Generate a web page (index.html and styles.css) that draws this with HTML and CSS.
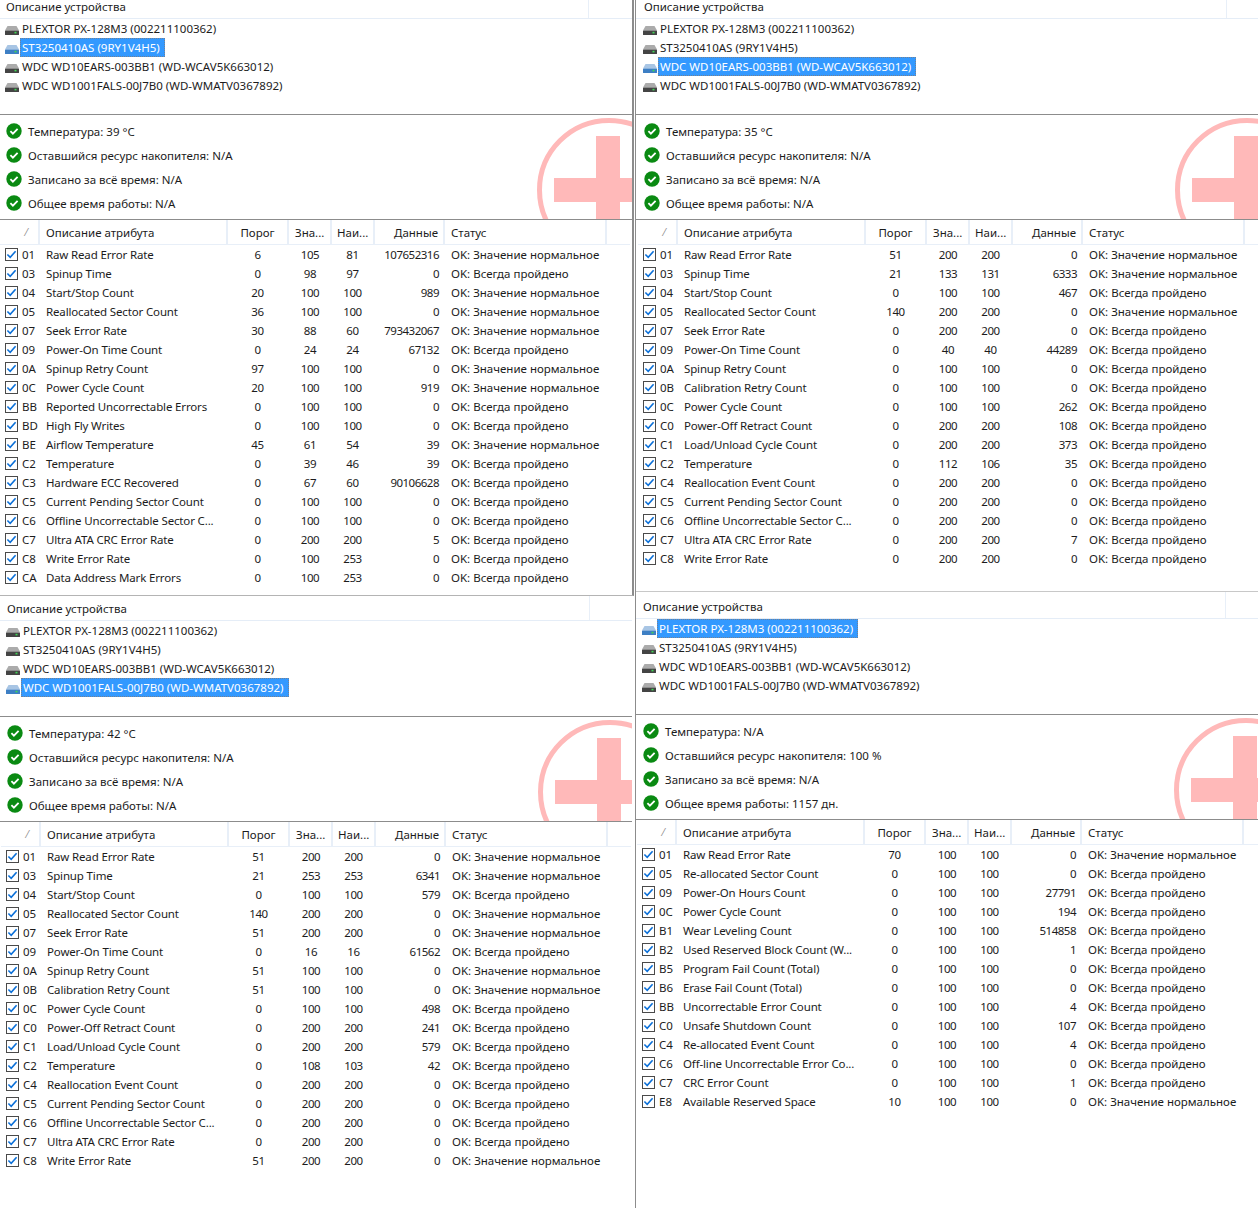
FILE: index.html
```html
<!DOCTYPE html>
<html lang="ru">
<head>
<meta charset="utf-8">
<title>CrystalDiskInfo</title>
<link rel="stylesheet" href="styles.css">
</head>
<body>
<svg class="defs" width="0" height="0" aria-hidden="true">
  <symbol id="disk" viewBox="0 0 14 9">
    <path d="M2.5 0h9l2.5 4.5H0z" fill="currentColor" opacity=".45"/>
    <rect x="0" y="4.5" width="14" height="4.5" rx=".6" fill="currentColor"/>
    <rect x="9.5" y="5.8" width="2" height="1.6" fill="#3fd655"/>
  </symbol>
  <symbol id="ok" viewBox="0 0 16 16">
    <circle cx="8" cy="8" r="7.7" fill="#0a8a12"/>
    <path d="M4.4 8.2l2.5 2.5 4.7-4.9" fill="none" stroke="#fff" stroke-width="1.8"/>
  </symbol>
  <symbol id="cb" viewBox="0 0 13 13">
    <rect x=".5" y=".5" width="12" height="12" fill="#fff" stroke="#4a4a4a"/>
    <path d="M2.4 6.5l2.8 2.8 5.4-6.1" fill="none" stroke="#0a6fd8" stroke-width="1.6"/>
  </symbol>
  <symbol id="logo" viewBox="0 0 150 150">
    <circle cx="72" cy="72" r="69.5" fill="none" stroke="#ffb9b9" stroke-width="5"/>
    <path d="M59 18h24v42h54v24H83v42H59V84H17V60h42z" fill="#ffb9b9"/>
  </symbol>
</svg>
<main class="desktop">
  <div class="col col-left">
    <section class="win win-a">
      <div class="head"><span>Описание устройства</span></div>
      <ul class="devices">
        <li><svg class="disk"><use href="#disk"/></svg><span>PLEXTOR PX-128M3 (002211100362)</span></li>
        <li class="sel"><svg class="disk"><use href="#disk"/></svg><span>ST3250410AS (9RY1V4H5)</span></li>
        <li><svg class="disk"><use href="#disk"/></svg><span>WDC WD10EARS-003BB1 (WD-WCAV5K663012)</span></li>
        <li><svg class="disk"><use href="#disk"/></svg><span>WDC WD1001FALS-00J7B0 (WD-WMATV0367892)</span></li>
      </ul>
      <div class="health">
        <svg class="logo"><use href="#logo"/></svg>
        <p><svg class="ok"><use href="#ok"/></svg>Температура: 39 °C</p>
        <p><svg class="ok"><use href="#ok"/></svg>Оставшийся ресурс накопителя: N/A</p>
        <p><svg class="ok"><use href="#ok"/></svg>Записано за всё время: N/A</p>
        <p><svg class="ok"><use href="#ok"/></svg>Общее время работы: N/A</p>
      </div>
      <table class="attrs">
        <thead><tr><th class="sort">⁄</th><th>Описание атрибута</th><th>Порог</th><th>Зна...</th><th>Наи...</th><th>Данные</th><th>Статус</th><th></th></tr></thead>
        <tbody>
          <tr><td><svg class="cb"><use href="#cb"/></svg>01</td><td>Raw Read Error Rate</td><td>6</td><td>105</td><td>81</td><td>107652316</td><td>OK: Значение нормальное</td></tr>
          <tr><td><svg class="cb"><use href="#cb"/></svg>03</td><td>Spinup Time</td><td>0</td><td>98</td><td>97</td><td>0</td><td>OK: Всегда пройдено</td></tr>
          <tr><td><svg class="cb"><use href="#cb"/></svg>04</td><td>Start/Stop Count</td><td>20</td><td>100</td><td>100</td><td>989</td><td>OK: Значение нормальное</td></tr>
          <tr><td><svg class="cb"><use href="#cb"/></svg>05</td><td>Reallocated Sector Count</td><td>36</td><td>100</td><td>100</td><td>0</td><td>OK: Значение нормальное</td></tr>
          <tr><td><svg class="cb"><use href="#cb"/></svg>07</td><td>Seek Error Rate</td><td>30</td><td>88</td><td>60</td><td>793432067</td><td>OK: Значение нормальное</td></tr>
          <tr><td><svg class="cb"><use href="#cb"/></svg>09</td><td>Power-On Time Count</td><td>0</td><td>24</td><td>24</td><td>67132</td><td>OK: Всегда пройдено</td></tr>
          <tr><td><svg class="cb"><use href="#cb"/></svg>0A</td><td>Spinup Retry Count</td><td>97</td><td>100</td><td>100</td><td>0</td><td>OK: Значение нормальное</td></tr>
          <tr><td><svg class="cb"><use href="#cb"/></svg>0C</td><td>Power Cycle Count</td><td>20</td><td>100</td><td>100</td><td>919</td><td>OK: Значение нормальное</td></tr>
          <tr><td><svg class="cb"><use href="#cb"/></svg>BB</td><td>Reported Uncorrectable Errors</td><td>0</td><td>100</td><td>100</td><td>0</td><td>OK: Всегда пройдено</td></tr>
          <tr><td><svg class="cb"><use href="#cb"/></svg>BD</td><td>High Fly Writes</td><td>0</td><td>100</td><td>100</td><td>0</td><td>OK: Всегда пройдено</td></tr>
          <tr><td><svg class="cb"><use href="#cb"/></svg>BE</td><td>Airflow Temperature</td><td>45</td><td>61</td><td>54</td><td>39</td><td>OK: Значение нормальное</td></tr>
          <tr><td><svg class="cb"><use href="#cb"/></svg>C2</td><td>Temperature</td><td>0</td><td>39</td><td>46</td><td>39</td><td>OK: Всегда пройдено</td></tr>
          <tr><td><svg class="cb"><use href="#cb"/></svg>C3</td><td>Hardware ECC Recovered</td><td>0</td><td>67</td><td>60</td><td>90106628</td><td>OK: Всегда пройдено</td></tr>
          <tr><td><svg class="cb"><use href="#cb"/></svg>C5</td><td>Current Pending Sector Count</td><td>0</td><td>100</td><td>100</td><td>0</td><td>OK: Всегда пройдено</td></tr>
          <tr><td><svg class="cb"><use href="#cb"/></svg>C6</td><td>Offline Uncorrectable Sector C...</td><td>0</td><td>100</td><td>100</td><td>0</td><td>OK: Всегда пройдено</td></tr>
          <tr><td><svg class="cb"><use href="#cb"/></svg>C7</td><td>Ultra ATA CRC Error Rate</td><td>0</td><td>200</td><td>200</td><td>5</td><td>OK: Всегда пройдено</td></tr>
          <tr><td><svg class="cb"><use href="#cb"/></svg>C8</td><td>Write Error Rate</td><td>0</td><td>100</td><td>253</td><td>0</td><td>OK: Всегда пройдено</td></tr>
          <tr><td><svg class="cb"><use href="#cb"/></svg>CA</td><td>Data Address Mark Errors</td><td>0</td><td>100</td><td>253</td><td>0</td><td>OK: Всегда пройдено</td></tr>
        </tbody>
      </table>
    </section>
    <section class="win win-c">
      <div class="head"><span>Описание устройства</span></div>
      <ul class="devices">
        <li><svg class="disk"><use href="#disk"/></svg><span>PLEXTOR PX-128M3 (002211100362)</span></li>
        <li><svg class="disk"><use href="#disk"/></svg><span>ST3250410AS (9RY1V4H5)</span></li>
        <li><svg class="disk"><use href="#disk"/></svg><span>WDC WD10EARS-003BB1 (WD-WCAV5K663012)</span></li>
        <li class="sel"><svg class="disk"><use href="#disk"/></svg><span>WDC WD1001FALS-00J7B0 (WD-WMATV0367892)</span></li>
      </ul>
      <div class="health">
        <svg class="logo"><use href="#logo"/></svg>
        <p><svg class="ok"><use href="#ok"/></svg>Температура: 42 °C</p>
        <p><svg class="ok"><use href="#ok"/></svg>Оставшийся ресурс накопителя: N/A</p>
        <p><svg class="ok"><use href="#ok"/></svg>Записано за всё время: N/A</p>
        <p><svg class="ok"><use href="#ok"/></svg>Общее время работы: N/A</p>
      </div>
      <table class="attrs">
        <thead><tr><th class="sort">⁄</th><th>Описание атрибута</th><th>Порог</th><th>Зна...</th><th>Наи...</th><th>Данные</th><th>Статус</th><th></th></tr></thead>
        <tbody>
          <tr><td><svg class="cb"><use href="#cb"/></svg>01</td><td>Raw Read Error Rate</td><td>51</td><td>200</td><td>200</td><td>0</td><td>OK: Значение нормальное</td></tr>
          <tr><td><svg class="cb"><use href="#cb"/></svg>03</td><td>Spinup Time</td><td>21</td><td>253</td><td>253</td><td>6341</td><td>OK: Значение нормальное</td></tr>
          <tr><td><svg class="cb"><use href="#cb"/></svg>04</td><td>Start/Stop Count</td><td>0</td><td>100</td><td>100</td><td>579</td><td>OK: Всегда пройдено</td></tr>
          <tr><td><svg class="cb"><use href="#cb"/></svg>05</td><td>Reallocated Sector Count</td><td>140</td><td>200</td><td>200</td><td>0</td><td>OK: Значение нормальное</td></tr>
          <tr><td><svg class="cb"><use href="#cb"/></svg>07</td><td>Seek Error Rate</td><td>51</td><td>200</td><td>200</td><td>0</td><td>OK: Значение нормальное</td></tr>
          <tr><td><svg class="cb"><use href="#cb"/></svg>09</td><td>Power-On Time Count</td><td>0</td><td>16</td><td>16</td><td>61562</td><td>OK: Всегда пройдено</td></tr>
          <tr><td><svg class="cb"><use href="#cb"/></svg>0A</td><td>Spinup Retry Count</td><td>51</td><td>100</td><td>100</td><td>0</td><td>OK: Значение нормальное</td></tr>
          <tr><td><svg class="cb"><use href="#cb"/></svg>0B</td><td>Calibration Retry Count</td><td>51</td><td>100</td><td>100</td><td>0</td><td>OK: Значение нормальное</td></tr>
          <tr><td><svg class="cb"><use href="#cb"/></svg>0C</td><td>Power Cycle Count</td><td>0</td><td>100</td><td>100</td><td>498</td><td>OK: Всегда пройдено</td></tr>
          <tr><td><svg class="cb"><use href="#cb"/></svg>C0</td><td>Power-Off Retract Count</td><td>0</td><td>200</td><td>200</td><td>241</td><td>OK: Всегда пройдено</td></tr>
          <tr><td><svg class="cb"><use href="#cb"/></svg>C1</td><td>Load/Unload Cycle Count</td><td>0</td><td>200</td><td>200</td><td>579</td><td>OK: Всегда пройдено</td></tr>
          <tr><td><svg class="cb"><use href="#cb"/></svg>C2</td><td>Temperature</td><td>0</td><td>108</td><td>103</td><td>42</td><td>OK: Всегда пройдено</td></tr>
          <tr><td><svg class="cb"><use href="#cb"/></svg>C4</td><td>Reallocation Event Count</td><td>0</td><td>200</td><td>200</td><td>0</td><td>OK: Всегда пройдено</td></tr>
          <tr><td><svg class="cb"><use href="#cb"/></svg>C5</td><td>Current Pending Sector Count</td><td>0</td><td>200</td><td>200</td><td>0</td><td>OK: Всегда пройдено</td></tr>
          <tr><td><svg class="cb"><use href="#cb"/></svg>C6</td><td>Offline Uncorrectable Sector C...</td><td>0</td><td>200</td><td>200</td><td>0</td><td>OK: Всегда пройдено</td></tr>
          <tr><td><svg class="cb"><use href="#cb"/></svg>C7</td><td>Ultra ATA CRC Error Rate</td><td>0</td><td>200</td><td>200</td><td>0</td><td>OK: Всегда пройдено</td></tr>
          <tr><td><svg class="cb"><use href="#cb"/></svg>C8</td><td>Write Error Rate</td><td>51</td><td>200</td><td>200</td><td>0</td><td>OK: Значение нормальное</td></tr>
        </tbody>
      </table>
    </section>
  </div>
  <div class="col col-right">
    <section class="win win-b">
      <div class="head"><span>Описание устройства</span></div>
      <ul class="devices">
        <li><svg class="disk"><use href="#disk"/></svg><span>PLEXTOR PX-128M3 (002211100362)</span></li>
        <li><svg class="disk"><use href="#disk"/></svg><span>ST3250410AS (9RY1V4H5)</span></li>
        <li class="sel"><svg class="disk"><use href="#disk"/></svg><span>WDC WD10EARS-003BB1 (WD-WCAV5K663012)</span></li>
        <li><svg class="disk"><use href="#disk"/></svg><span>WDC WD1001FALS-00J7B0 (WD-WMATV0367892)</span></li>
      </ul>
      <div class="health">
        <svg class="logo"><use href="#logo"/></svg>
        <p><svg class="ok"><use href="#ok"/></svg>Температура: 35 °C</p>
        <p><svg class="ok"><use href="#ok"/></svg>Оставшийся ресурс накопителя: N/A</p>
        <p><svg class="ok"><use href="#ok"/></svg>Записано за всё время: N/A</p>
        <p><svg class="ok"><use href="#ok"/></svg>Общее время работы: N/A</p>
      </div>
      <table class="attrs">
        <thead><tr><th class="sort">⁄</th><th>Описание атрибута</th><th>Порог</th><th>Зна...</th><th>Наи...</th><th>Данные</th><th>Статус</th><th></th></tr></thead>
        <tbody>
          <tr><td><svg class="cb"><use href="#cb"/></svg>01</td><td>Raw Read Error Rate</td><td>51</td><td>200</td><td>200</td><td>0</td><td>OK: Значение нормальное</td></tr>
          <tr><td><svg class="cb"><use href="#cb"/></svg>03</td><td>Spinup Time</td><td>21</td><td>133</td><td>131</td><td>6333</td><td>OK: Значение нормальное</td></tr>
          <tr><td><svg class="cb"><use href="#cb"/></svg>04</td><td>Start/Stop Count</td><td>0</td><td>100</td><td>100</td><td>467</td><td>OK: Всегда пройдено</td></tr>
          <tr><td><svg class="cb"><use href="#cb"/></svg>05</td><td>Reallocated Sector Count</td><td>140</td><td>200</td><td>200</td><td>0</td><td>OK: Значение нормальное</td></tr>
          <tr><td><svg class="cb"><use href="#cb"/></svg>07</td><td>Seek Error Rate</td><td>0</td><td>200</td><td>200</td><td>0</td><td>OK: Всегда пройдено</td></tr>
          <tr><td><svg class="cb"><use href="#cb"/></svg>09</td><td>Power-On Time Count</td><td>0</td><td>40</td><td>40</td><td>44289</td><td>OK: Всегда пройдено</td></tr>
          <tr><td><svg class="cb"><use href="#cb"/></svg>0A</td><td>Spinup Retry Count</td><td>0</td><td>100</td><td>100</td><td>0</td><td>OK: Всегда пройдено</td></tr>
          <tr><td><svg class="cb"><use href="#cb"/></svg>0B</td><td>Calibration Retry Count</td><td>0</td><td>100</td><td>100</td><td>0</td><td>OK: Всегда пройдено</td></tr>
          <tr><td><svg class="cb"><use href="#cb"/></svg>0C</td><td>Power Cycle Count</td><td>0</td><td>100</td><td>100</td><td>262</td><td>OK: Всегда пройдено</td></tr>
          <tr><td><svg class="cb"><use href="#cb"/></svg>C0</td><td>Power-Off Retract Count</td><td>0</td><td>200</td><td>200</td><td>108</td><td>OK: Всегда пройдено</td></tr>
          <tr><td><svg class="cb"><use href="#cb"/></svg>C1</td><td>Load/Unload Cycle Count</td><td>0</td><td>200</td><td>200</td><td>373</td><td>OK: Всегда пройдено</td></tr>
          <tr><td><svg class="cb"><use href="#cb"/></svg>C2</td><td>Temperature</td><td>0</td><td>112</td><td>106</td><td>35</td><td>OK: Всегда пройдено</td></tr>
          <tr><td><svg class="cb"><use href="#cb"/></svg>C4</td><td>Reallocation Event Count</td><td>0</td><td>200</td><td>200</td><td>0</td><td>OK: Всегда пройдено</td></tr>
          <tr><td><svg class="cb"><use href="#cb"/></svg>C5</td><td>Current Pending Sector Count</td><td>0</td><td>200</td><td>200</td><td>0</td><td>OK: Всегда пройдено</td></tr>
          <tr><td><svg class="cb"><use href="#cb"/></svg>C6</td><td>Offline Uncorrectable Sector C...</td><td>0</td><td>200</td><td>200</td><td>0</td><td>OK: Всегда пройдено</td></tr>
          <tr><td><svg class="cb"><use href="#cb"/></svg>C7</td><td>Ultra ATA CRC Error Rate</td><td>0</td><td>200</td><td>200</td><td>7</td><td>OK: Всегда пройдено</td></tr>
          <tr><td><svg class="cb"><use href="#cb"/></svg>C8</td><td>Write Error Rate</td><td>0</td><td>200</td><td>200</td><td>0</td><td>OK: Всегда пройдено</td></tr>
        </tbody>
      </table>
    </section>
    <section class="win win-d">
      <div class="head"><span>Описание устройства</span></div>
      <ul class="devices">
        <li class="sel"><svg class="disk"><use href="#disk"/></svg><span>PLEXTOR PX-128M3 (002211100362)</span></li>
        <li><svg class="disk"><use href="#disk"/></svg><span>ST3250410AS (9RY1V4H5)</span></li>
        <li><svg class="disk"><use href="#disk"/></svg><span>WDC WD10EARS-003BB1 (WD-WCAV5K663012)</span></li>
        <li><svg class="disk"><use href="#disk"/></svg><span>WDC WD1001FALS-00J7B0 (WD-WMATV0367892)</span></li>
      </ul>
      <div class="health">
        <svg class="logo"><use href="#logo"/></svg>
        <p><svg class="ok"><use href="#ok"/></svg>Температура: N/A</p>
        <p><svg class="ok"><use href="#ok"/></svg>Оставшийся ресурс накопителя: 100 %</p>
        <p><svg class="ok"><use href="#ok"/></svg>Записано за всё время: N/A</p>
        <p><svg class="ok"><use href="#ok"/></svg>Общее время работы: 1157 дн.</p>
      </div>
      <table class="attrs">
        <thead><tr><th class="sort">⁄</th><th>Описание атрибута</th><th>Порог</th><th>Зна...</th><th>Наи...</th><th>Данные</th><th>Статус</th><th></th></tr></thead>
        <tbody>
          <tr><td><svg class="cb"><use href="#cb"/></svg>01</td><td>Raw Read Error Rate</td><td>70</td><td>100</td><td>100</td><td>0</td><td>OK: Значение нормальное</td></tr>
          <tr><td><svg class="cb"><use href="#cb"/></svg>05</td><td>Re-allocated Sector Count</td><td>0</td><td>100</td><td>100</td><td>0</td><td>OK: Всегда пройдено</td></tr>
          <tr><td><svg class="cb"><use href="#cb"/></svg>09</td><td>Power-On Hours Count</td><td>0</td><td>100</td><td>100</td><td>27791</td><td>OK: Всегда пройдено</td></tr>
          <tr><td><svg class="cb"><use href="#cb"/></svg>0C</td><td>Power Cycle Count</td><td>0</td><td>100</td><td>100</td><td>194</td><td>OK: Всегда пройдено</td></tr>
          <tr><td><svg class="cb"><use href="#cb"/></svg>B1</td><td>Wear Leveling Count</td><td>0</td><td>100</td><td>100</td><td>514858</td><td>OK: Всегда пройдено</td></tr>
          <tr><td><svg class="cb"><use href="#cb"/></svg>B2</td><td>Used Reserved Block Count (W...</td><td>0</td><td>100</td><td>100</td><td>1</td><td>OK: Всегда пройдено</td></tr>
          <tr><td><svg class="cb"><use href="#cb"/></svg>B5</td><td>Program Fail Count (Total)</td><td>0</td><td>100</td><td>100</td><td>0</td><td>OK: Всегда пройдено</td></tr>
          <tr><td><svg class="cb"><use href="#cb"/></svg>B6</td><td>Erase Fail Count (Total)</td><td>0</td><td>100</td><td>100</td><td>0</td><td>OK: Всегда пройдено</td></tr>
          <tr><td><svg class="cb"><use href="#cb"/></svg>BB</td><td>Uncorrectable Error Count</td><td>0</td><td>100</td><td>100</td><td>4</td><td>OK: Всегда пройдено</td></tr>
          <tr><td><svg class="cb"><use href="#cb"/></svg>C0</td><td>Unsafe Shutdown Count</td><td>0</td><td>100</td><td>100</td><td>107</td><td>OK: Всегда пройдено</td></tr>
          <tr><td><svg class="cb"><use href="#cb"/></svg>C4</td><td>Re-allocated Event Count</td><td>0</td><td>100</td><td>100</td><td>4</td><td>OK: Всегда пройдено</td></tr>
          <tr><td><svg class="cb"><use href="#cb"/></svg>C6</td><td>Off-line Uncorrectable Error Co...</td><td>0</td><td>100</td><td>100</td><td>0</td><td>OK: Всегда пройдено</td></tr>
          <tr><td><svg class="cb"><use href="#cb"/></svg>C7</td><td>CRC Error Count</td><td>0</td><td>100</td><td>100</td><td>1</td><td>OK: Всегда пройдено</td></tr>
          <tr><td><svg class="cb"><use href="#cb"/></svg>E8</td><td>Available Reserved Space</td><td>10</td><td>100</td><td>100</td><td>0</td><td>OK: Значение нормальное</td></tr>
        </tbody>
      </table>
    </section>
  </div>
</main>
</body>
</html>
```
FILE: styles.css
```css
* { box-sizing: border-box; }
html, body { margin: 0; padding: 0; background: #fff; }
body {
  width: 1258px;
  height: 1208px;
  overflow: hidden;
  font: 11.5px/19px "Noto Sans", "Open Sans", sans-serif;
  color: #1c1c1c;
}
.defs { position: absolute; }
.desktop { display: flex; height: 1208px; }
.col { display: flex; flex-direction: column; }
.col-left { width: 635px; }
.col-right { width: 623px; border-left: 1px solid #8c8c8c; }

.win { --dx: 0px; overflow: hidden; padding-left: var(--dx); }
.win-a { height: 596px; width: 634px; border-right: 2px solid #8c8c8c; border-bottom: 1px solid #b4b4b4; }
.win-b { --dx: 2px; height: 592px; border-bottom: 1px solid #c8c8c8; }
.win-c { --dx: 1px; flex: 1; width: 632px; }
.win-d { --dx: 1px; flex: 1; }

.head {
  height: 19px;
  margin-left: calc(var(--dx) * -1);
  padding-left: calc(var(--dx) + 6px);
  border-bottom: 1px solid #e5edf7;
  position: relative;
  line-height: 14px;
}
.head::after {
  content: "";
  position: absolute;
  left: calc(var(--dx) + 588px);
  top: 0;
  bottom: 0;
  border-left: 1px solid #e8eff8;
}
.win-c .head { height: 25px; padding-top: 6px; }
.win-d .head { height: 27px; padding-top: 8px; }

.devices {
  list-style: none;
  margin: 0 0 0 calc(var(--dx) * -1);
  padding: 0 0 0 var(--dx);
  height: 96px;
  border-bottom: 1px solid #8c8c8c;
}
.devices li { height: 19px; display: flex; align-items: center; padding-left: 5px; }
.disk { width: 14px; height: 9px; color: #444; flex: none; margin-top: 4px; }
.devices span { padding: 0 4px 0 1px; height: 19px; margin-left: 1px; border: 1px solid transparent; line-height: 17px; }
.sel .disk { color: #3d7fc4; }
.sel span { background: #3399ff; color: #fff; border: 1px dotted rgba(170, 110, 60, .55); }

.health {
  position: relative;
  height: 105px;
  margin-left: calc(var(--dx) * -1);
  padding: 4px 0 0 var(--dx);
  border-bottom: 1px solid #8c8c8c;
  overflow: hidden;
}
.health p { margin: 0; height: 24px; display: flex; align-items: center; padding-left: 6px; }
.ok { width: 16px; height: 16px; margin-right: 6px; flex: none; }
.logo { position: absolute; left: calc(var(--dx) + 537px); top: 3px; width: 150px; height: 150px; }

.attrs { border-collapse: collapse; table-layout: fixed; width: 630px; }
.attrs th { height: 24px; padding: 2px 0 0 6px; font-weight: 400; text-align: left; background: #fff; border-right: 2px solid #e8eff8; border-bottom: 1px solid #e8eff8; white-space: nowrap; overflow: hidden; }
.attrs th:nth-child(1) { width: 39px; text-align: right; padding-right: 11px; color: #888; font-size: 10px; }
.attrs th:nth-child(2) { width: 188px; }
.attrs th:nth-child(3) { width: 61px; text-align: center; padding: 2px 0 0; }
.attrs th:nth-child(4) { width: 43px; }
.attrs th:nth-child(5) { width: 43px; padding-left: 5px; }
.attrs th:nth-child(6) { width: 70px; text-align: right; padding-right: 5px; }
.attrs th:nth-child(7) { width: 162px; }
.attrs th:nth-child(8) { border-right: 0; }
.attrs td { height: 19px; padding: 0 0 0 7px; white-space: nowrap; overflow: hidden; }
.attrs td:nth-child(1) { padding-left: 5px; }
.attrs td:nth-child(2) { letter-spacing: -.15px; }
.attrs td:nth-child(3), .attrs td:nth-child(5) { text-align: center; padding: 0; letter-spacing: -.4px; }
.attrs td:nth-child(4) { text-align: center; padding: 0 0 0 1px; letter-spacing: -.4px; }
.attrs td:nth-child(6) { text-align: right; padding: 0 5px 0 0; letter-spacing: -.5px; }
.cb { width: 13px; height: 13px; vertical-align: -2px; margin-right: 4px; }
```
